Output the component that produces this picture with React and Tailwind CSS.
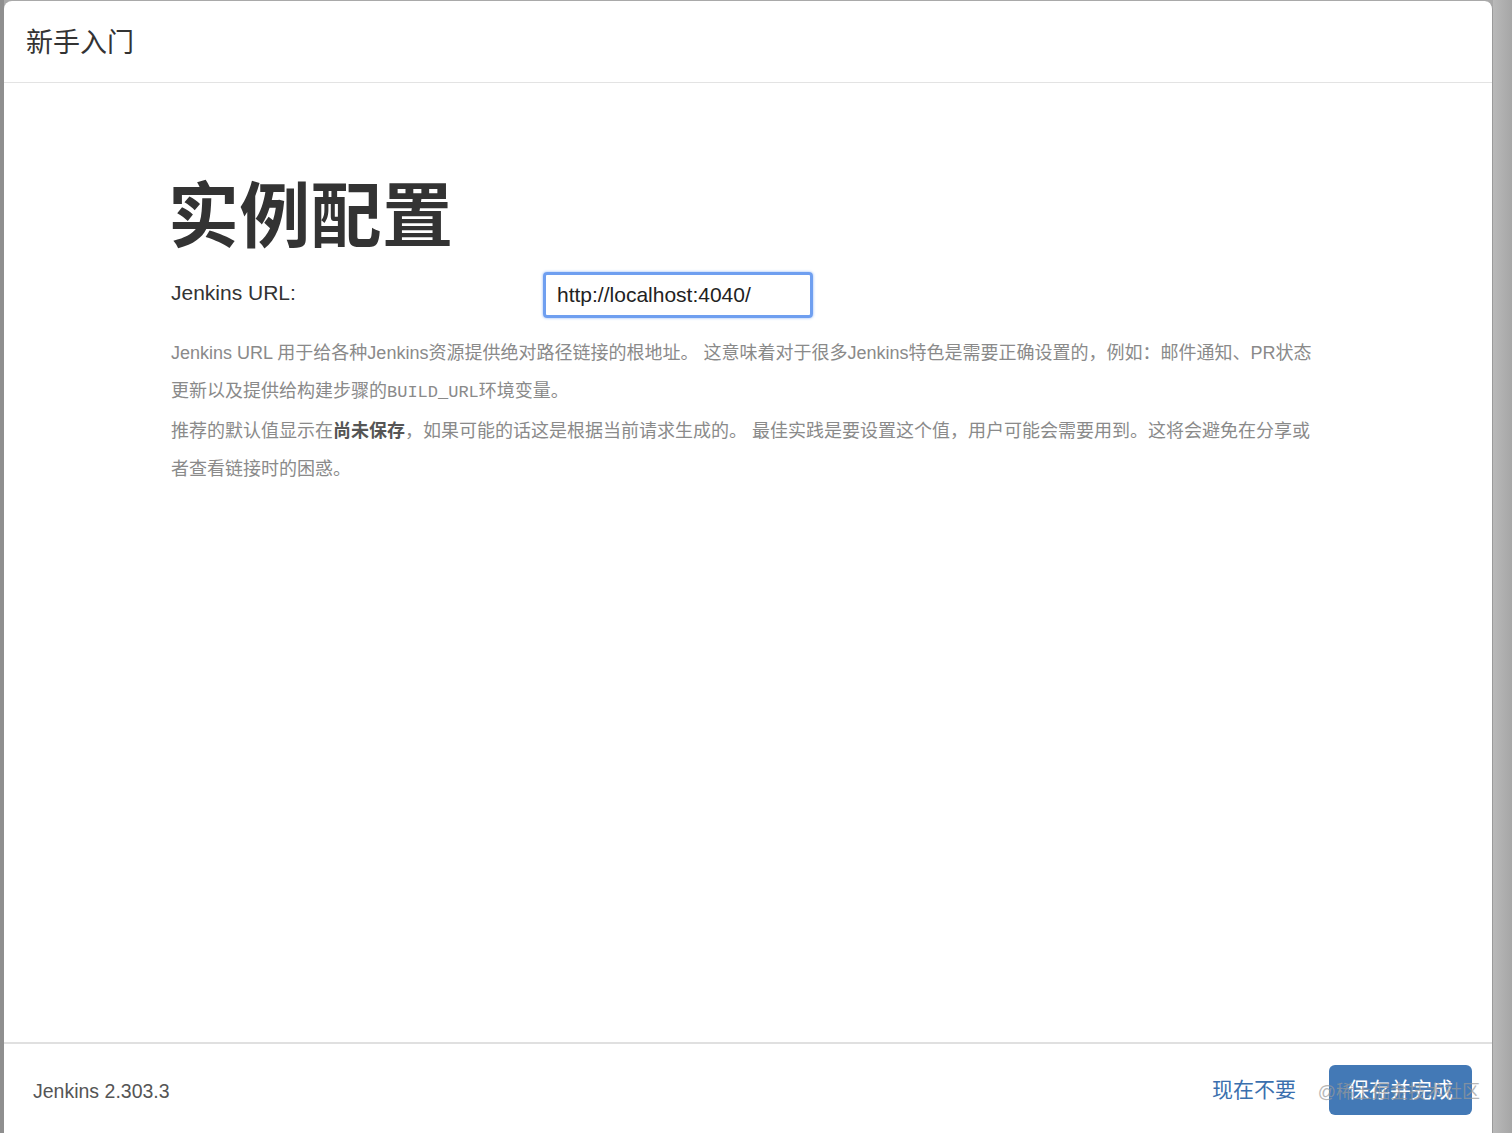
import React from 'react';

const sans = { fontFamily: '"Liberation Sans", "Noto Sans CJK SC", sans-serif' };

const App = () => {
  return (
    <div className="h-[1133px] w-[1512px] bg-[#a9a9a9] flex overflow-hidden" style={sans}>
      {/* Left edge */}
      <div className="w-[4px] bg-[#8f8f8f]" />

      {/* Dialog */}
      <div className="w-[1489px] mt-[1px] bg-white rounded-t-[8px] border-r border-[#9a9a9a] flex flex-col">
        {/* Header */}
        <header className="h-[82px] border-b border-[#e3e3e3] flex items-center px-[22px] pt-[4px]">
          <h4 className="text-[27px] text-[#333]">新手入门</h4>
        </header>

        {/* Body */}
        <main className="flex-1 pl-[166px] pt-[94px]">
          <h1 className="-ml-[2px] text-[71px] leading-[80px] font-bold text-[#333] tracking-[0.3px]">实例配置</h1>

          <div className="flex items-center mt-[15px] pl-[1px]">
            <label className="w-[372px] text-[21px] text-[#333] -mt-[5px]">Jenkins URL:</label>
            <div className="w-[270px] h-[46px] rounded-[4px] border-[3px] border-[#6f9ff0] shadow-[0_0_3px_#8fb5f5] flex items-center px-[11px]">
              <span className="text-[21px] text-[#222]">http://localhost:4040/</span>
            </div>
          </div>

          <div className="mt-[16px] pl-[1px] w-[1152px] text-[18px] leading-[38px] text-[#8a8a8a]">
            <p>
              Jenkins URL 用于给各种Jenkins资源提供绝对路径链接的根地址。 这意味着对于很多Jenkins特色是需要正确设置的，例如：邮件通知、PR状态更新以及提供给构建步骤的
              <code className="text-[17px]" style={{ fontFamily: '"Liberation Mono", "Noto Sans CJK SC", monospace' }}>BUILD_URL</code>
              环境变量。
            </p>
            <p>
              推荐的默认值显示在<strong className="font-semibold text-[#555]">尚未保存</strong>，如果可能的话这是根据当前请求生成的。 最佳实践是要设置这个值，用户可能会需要用到。这将会避免在分享或者查看链接时的困惑。
            </p>
          </div>
        </main>

        {/* Footer */}
        <footer className="relative h-[91px] border-t-2 border-[#e0e0e0] flex items-center justify-between pl-[29px] pr-[20px] pt-[3px]">
          <span className="mt-[4px] text-[19.5px] text-[#555]">Jenkins 2.303.3</span>
          <div className="flex items-center gap-[33px]">
            <a className="text-[21px] text-[#3a6fae]">现在不要</a>
            <button className="w-[143px] h-[50px] rounded-[6px] bg-[#4379b6] text-white text-[21px]">保存并完成</button>
          </div>
          <span className="absolute right-[12px] top-[35px] text-[18px] text-[#9a9a9a] opacity-70 pointer-events-none">@稀土掘金技术社区</span>
        </footer>
      </div>

      {/* Right backdrop */}
      <div className="flex-1 bg-gradient-to-r from-[#b9b9b9] to-[#a6a6a6]" />
    </div>
  );
};

export default App;
